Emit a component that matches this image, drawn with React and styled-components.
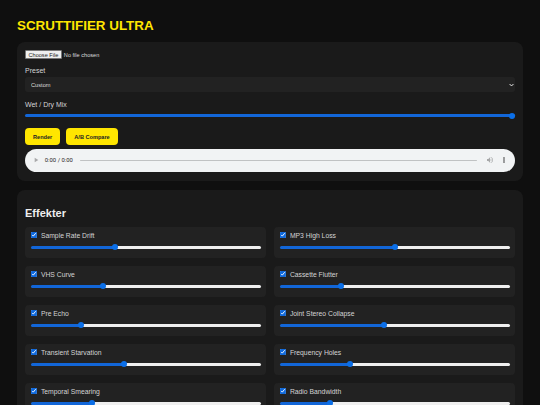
import React from 'react';
import styled, { createGlobalStyle } from 'styled-components';

const GlobalStyle = createGlobalStyle`
  html, body {
    margin: 0;
    background: #0f0f0f;
    height: 405px;
    overflow: hidden;
  }
  body {
    font-family: "Liberation Sans", Arial, sans-serif;
    color: #eeeeee;
  }
`;

const Page = styled.main`
  padding: 17px 17px 0;
`;

const Title = styled.h1`
  margin: 0 0 8px;
  font-size: 13.4px;
  line-height: 17px;
  font-weight: 700;
  color: #ffe600;
`;

const Panel = styled.section`
  background: #1a1a1a;
  border-radius: 8px;
  padding: 8px 8px 9px;
  margin-bottom: 9px;
`;

const FileInput = styled.input`
  display: block;
  font-size: 5.6px;
  height: 9px;
  color: #dddddd;
  font-family: inherit;
  margin: 0 0 8px;

  &::file-selector-button {
    font-size: 5.6px;
    font-family: inherit;
    height: 9px;
    padding: 0 2.5px;
    margin-right: 2px;
    border: 0.5px solid #777;
    border-radius: 1px;
    background: #efefef;
    color: #222;
  }
`;

const Label = styled.label`
  display: block;
  font-size: 7px;
  line-height: 8px;
  color: #d4d4d4;
  margin-bottom: 2px;
`;

const Select = styled.select`
  display: block;
  appearance: none;
  width: 100%;
  height: 15px;
  padding: 0 6px;
  margin-bottom: 9px;
  font-size: 5.7px;
  font-family: inherit;
  color: #dddddd;
  border: none;
  border-radius: 3px;
  background: #222222
    url("data:image/svg+xml,%3Csvg xmlns='http://www.w3.org/2000/svg' viewBox='0 0 8 6'%3E%3Cpath d='M1 1.5l3 3 3-3' fill='none' stroke='%23eee' stroke-width='1.6'/%3E%3C/svg%3E")
    no-repeat right 1.5px center / 5px 4px;
`;

const Slider = styled.input`
  display: block;
  appearance: none;
  width: 100%;
  height: 3px;
  margin: 0;
  border-radius: 2px;
  background: linear-gradient(
    to right,
    #1266d8 ${({ $value }) => $value}%,
    #efefef ${({ $value }) => $value}%
  );

  &::-webkit-slider-thumb {
    appearance: none;
    width: 6px;
    height: 6px;
    border-radius: 50%;
    background: #0b6fe8;
  }
`;

const MixSlider = styled(Slider)`
  margin: 5px 0 11px;
`;

const Buttons = styled.div`
  display: flex;
  gap: 6px;
  margin-bottom: 4px;
`;

const Button = styled.button`
  height: 17px;
  padding: 0 8px;
  border: none;
  border-radius: 4px;
  background: #ffe600;
  color: #222222;
  font-size: 5.6px;
  font-weight: 700;
  font-family: inherit;
`;

const Player = styled.audio`
  display: block;
  zoom: 0.42;
  width: 100%;
  height: 54px;
`;

const EffectsTitle = styled.h2`
  margin: 9px 0 7px;
  font-size: 11px;
  line-height: 13px;
  font-weight: 700;
  color: #eeeeee;
`;

const Grid = styled.div`
  display: grid;
  grid-template-columns: 1fr 1fr;
  gap: 8px;
`;

const Card = styled.div`
  background: #222222;
  border-radius: 4px;
  padding: 3px 5px 0 6px;
  height: 31px;
  box-sizing: border-box;
`;

const CardLabel = styled.label`
  display: flex;
  align-items: center;
  gap: 4px;
  height: 11px;
  margin-bottom: 5px;
  font-size: 6.8px;
  color: #d4d4d4;
`;

const Check = styled.input`
  zoom: 0.42;
  width: 14px;
  height: 14px;
  margin: 0;
  accent-color: #0f69dc;
`;

const effects = [
  ['Sample Rate Drift', 36],
  ['MP3 High Loss', 50],
  ['VHS Curve', 31],
  ['Cassette Flutter', 26],
  ['Pre Echo', 21],
  ['Joint Stereo Collapse', 45],
  ['Transient Starvation', 40],
  ['Frequency Holes', 30],
  ['Temporal Smearing', 26],
  ['Radio Bandwidth', 21],
];

const App = () => {
  return (
    <Page>
      <GlobalStyle />
      <Title>SCRUTTIFIER ULTRA</Title>
      <Panel>
        <FileInput type="file" />
        <Label htmlFor="preset">Preset</Label>
        <Select id="preset" defaultValue="Custom">
          <option>Custom</option>
        </Select>
        <Label htmlFor="mix">Wet / Dry Mix</Label>
        <MixSlider id="mix" type="range" min="0" max="100" defaultValue="100" $value={100} />
        <Buttons>
          <Button>Render</Button>
          <Button>A/B Compare</Button>
        </Buttons>
        <Player controls />
      </Panel>
      <Panel>
        <EffectsTitle>Effekter</EffectsTitle>
        <Grid>
          {effects.map(([name, value]) => (
            <Card key={name}>
              <CardLabel>
                <Check type="checkbox" defaultChecked />
                {name}
              </CardLabel>
              <Slider type="range" min="0" max="100" defaultValue={value} $value={value} />
            </Card>
          ))}
        </Grid>
      </Panel>
    </Page>
  );
};

export default App;
